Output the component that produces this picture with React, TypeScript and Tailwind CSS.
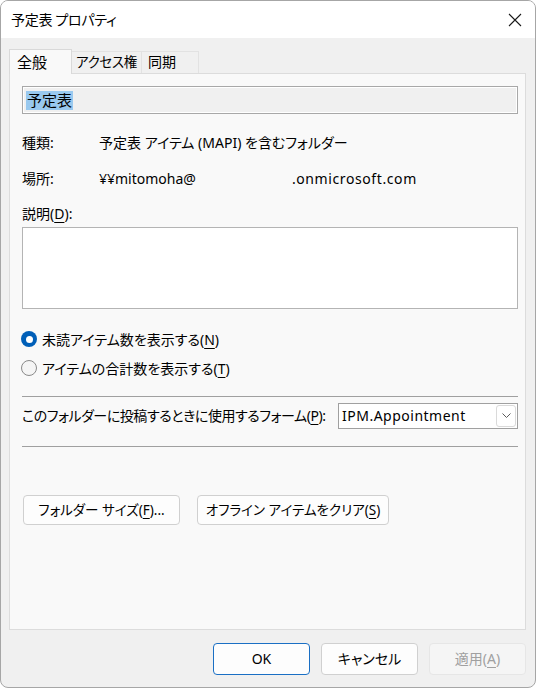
import React from "react";

const font = "font-['Noto_Sans','Noto_Sans_CJK_JP',sans-serif] [font-feature-settings:'palt']";

// mnemonic letter, underlined like Win32 access keys
const K: React.FC<{ c: string }> = ({ c }) => (
  <span className="underline underline-offset-[3px] decoration-1">{c}</span>
);

const Radio: React.FC<{ checked?: boolean; children: React.ReactNode }> = ({ checked, children }) => (
  <div className="flex items-center h-[20px] gap-[5px] -ml-px">
    {checked ? (
      <span className="w-[16px] h-[16px] rounded-full bg-[#005fb8] flex items-center justify-center">
        <span className="w-[7px] h-[7px] rounded-full bg-white" />
      </span>
    ) : (
      <span className="w-[16px] h-[16px] rounded-full border border-[#8a8a8a] bg-[#f5f5f5]" />
    )}
    <span>{children}</span>
  </div>
);

export default function App() {
  return (
    <div className={`w-[537px] h-[688px] bg-white text-[14px] text-black ${font}`}>
      <div className="w-[536px] h-[688px] rounded-[8px] border border-[#a6a6a6] bg-[#f0f0f0] overflow-hidden flex flex-col">
        {/* title bar */}
        <div className="h-[37px] bg-white flex items-center justify-between pl-[10px] pr-[13px] shrink-0">
          <span className="leading-[20px] tracking-[-0.3px]">予定表 プロパティ</span>
          <svg width="14" height="14" viewBox="0 0 14 14">
            <path d="M1 1L13 13M13 1L1 13" stroke="#1a1a1a" strokeWidth="1.1" fill="none" />
          </svg>
        </div>

        <div className="flex-1 px-[8px] flex flex-col">
          {/* tabs */}
          <div className="mt-[11px] h-[24px] flex items-end relative z-10">
            <div className="w-[63px] h-[25px] -mb-px border border-b-0 border-[#d9d9d9] bg-[#f9f9f9] pl-[7px] pt-[2px] leading-[20px] text-[15px]">
              全般
            </div>
            <div className="w-[70px] h-[22px] border border-l-0 border-b-0 border-[#e2e2e2] bg-[#f0f0f0] pl-[4px] leading-[20px] text-[13.5px] tracking-[-0.3px]">
              アクセス権
            </div>
            <div className="w-[57px] h-[22px] border border-l-0 border-b-0 border-[#e2e2e2] bg-[#f0f0f0] pl-[6px] leading-[20px]">
              同期
            </div>
          </div>

          {/* tab page */}
          <div className="w-[517px] h-[557px] border border-[#dcdcdc] bg-[#f9f9f9] pl-[12px] pr-[7px] flex flex-col">
            <div className="mt-[12px] h-[28px] border border-[#a8a8a8] bg-[#f0f0f0] shadow-[inset_0_0_0_1px_#ffffff] flex items-center pl-[3px]">
              <span className="bg-[#99c9ef] h-[19px] leading-[19px] px-[1px] text-[15px]">予定表</span>
            </div>

            <div className="mt-[19px] h-[20px] flex leading-[20px]">
              <span className="w-[77px]">種類:</span>
              <span>予定表 アイテム (MAPI) を含むフォルダー</span>
            </div>
            <div className="mt-[16px] h-[20px] flex leading-[20px]">
              <span className="w-[77px]">場所:</span>
              <span>¥¥mitomoha@</span>
              <span className="w-[96px]" />
              <span className="tracking-[0.6px]">.onmicrosoft.com</span>
            </div>
            <div className="mt-[15px] h-[20px] leading-[20px]">
              説明(<K c="D" />):
            </div>
            <div className="mt-[3px] h-[82px] border border-[#b4b4b4] bg-white" />

            <div className="mt-[20px]">
              <Radio checked>
                未読アイテム数を表示する(<K c="N" />)
              </Radio>
            </div>
            <div className="mt-[9px]">
              <Radio>
                アイテムの合計数を表示する(<K c="T" />)
              </Radio>
            </div>

            <div className="mt-[18px] border-t border-[#a0a0a0]" />

            <div className="mt-[6px] h-[26px] flex items-center justify-between">
              <span className="leading-[20px] tracking-[-0.45px]">
                このフォルダーに投稿するときに使用するフォーム(<K c="P" />):
              </span>
              <div className="w-[180px] h-[26px] border border-[#a0a0a0] bg-white flex items-center justify-between pl-[3px] pr-[1px]">
                <span className="leading-[20px] tracking-[0.5px]">IPM.Appointment</span>
                <span className="w-[20px] h-[22px] border border-[#dadada] rounded-[3px] flex items-center justify-center">
                  <svg width="9" height="6" viewBox="0 0 9 6">
                    <path d="M0.5 0.5L4.5 4.5L8.5 0.5" stroke="#5a5a5a" strokeWidth="1" fill="none" />
                  </svg>
                </span>
              </div>
            </div>

            <div className="mt-[17px] border-t border-[#a0a0a0]" />

            <div className="mt-[48px] flex gap-[17px]">
              <button className="w-[157px] h-[30px] ml-px border border-[#d0d0d0] rounded-[4px] bg-[#fdfdfd] text-[13.5px] leading-[20px]">
                フォルダー サイズ(<K c="F" />)...
              </button>
              <button className="w-[192px] h-[30px] border border-[#d0d0d0] rounded-[4px] bg-[#fdfdfd] text-[13.5px] leading-[20px]">
                オフライン アイテムをクリア(<K c="S" />)
              </button>
            </div>
          </div>

          {/* dialog buttons */}
          <div className="mt-[13px] flex justify-end gap-[11px] pr-[1px]">
            <button className="w-[97px] h-[32px] border border-[#1a6fc4] rounded-[4px] bg-[#fdfdfd] leading-[20px]">
              OK
            </button>
            <button className="w-[97px] h-[32px] border border-[#d0d0d0] rounded-[4px] bg-[#fdfdfd] leading-[20px]">
              キャンセル
            </button>
            <button className="w-[97px] h-[32px] border border-[#e6e6e6] rounded-[4px] bg-[#f5f5f5] text-[#a0a0a0] leading-[20px]">
              適用(<K c="A" />)
            </button>
          </div>
        </div>
      </div>
    </div>
  );
}
